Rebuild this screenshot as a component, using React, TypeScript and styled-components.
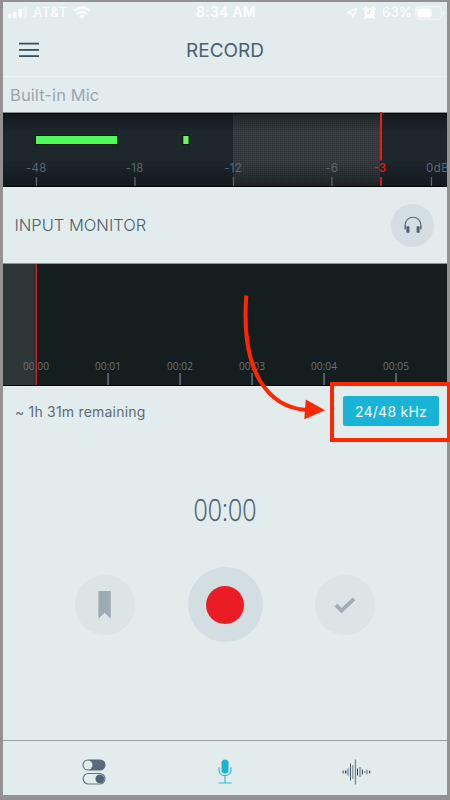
import React from "react";
import styled, { createGlobalStyle } from "styled-components";

const GlobalStyle = createGlobalStyle`
  * { box-sizing: border-box; }
  body { margin: 0; background: #929292; font-family: Inter, "Liberation Sans", sans-serif; }
  svg { display: block; flex: none; }
`;

const Frame = styled.div`
  position: relative;
  width: 450px;
  height: 800px;
  padding: 2px 3px 5px;
  background: #929292;
  overflow: hidden;
`;

const Screen = styled.main`
  display: flex;
  flex-direction: column;
  width: 444px;
  height: 793px;
  background: #e3eced;
  color: #4a5f70;
`;

const StatusBar = styled.div`
  display: grid;
  grid-template-columns: 1fr auto 1fr;
  align-items: center;
  height: 21px;
  padding: 0 2px 0 4px;
  color: #fff;
  font-size: 13.5px;
  line-height: 21px;
`;

const StatusGroup = styled.div<{ $end?: boolean }>`
  display: flex;
  align-items: center;
  justify-content: ${(p) => (p.$end ? "flex-end" : "flex-start")};
`;

const Carrier = styled.span`
  margin: 0 6px 0 6px;
  letter-spacing: 0.35px;
`;

const Clock = styled.span`
  font-size: 13.8px;
  font-weight: 600;
  letter-spacing: 0.35px;
`;

const Battery = styled.span`
  margin: 0 3px 0 6px;
`;

const Status = styled.span`
  display: flex;
  align-items: center;
  gap: 5px;
`;

const NavBar = styled.header`
  display: grid;
  grid-template-columns: 52px 1fr 52px;
  align-items: center;
  height: 54px;
  border-bottom: 1px solid #eef4f5;
`;

const MenuButton = styled.button`
  display: flex;
  padding: 1px 0 0 16px;
  border: 0;
  background: none;
`;

const Title = styled.h1`
  margin: 2px 0 0;
  text-align: center;
  font-size: 19px;
  font-weight: 400;
  line-height: 24px;
  letter-spacing: 0;
`;

const Source = styled.div`
  height: 35px;
  padding: 6px 0 0 7px;
  color: #9aa7b0;
  font-size: 16.5px;
  line-height: 24px;
  letter-spacing: 0.1px;
`;

const MonitorRow = styled.section`
  display: flex;
  align-items: center;
  justify-content: space-between;
  height: 76px;
  padding: 0 13px 0 11.5px;
`;

const MonitorLabel = styled.span`
  font-size: 16.5px;
  font-weight: 350;
  letter-spacing: 0;
`;

const RoundButton = styled.button<{ $size: number; $faint?: boolean }>`
  display: flex;
  align-items: center;
  justify-content: center;
  width: ${(p) => p.$size}px;
  height: ${(p) => p.$size}px;
  padding: 0;
  border: 0;
  border-radius: 50%;
  background: ${(p) => (p.$faint ? "#dce4e6" : "#d3dee3")};
`;

const InfoRow = styled.section`
  display: flex;
  align-items: center;
  justify-content: space-between;
  height: 50px;
  padding: 0 8px 0 12px;
`;

const Remaining = styled.span`
  font-size: 14px;
  letter-spacing: 0.2px;
  color: #5b6c7b;
`;

const RateButton = styled.button`
  width: 96px;
  height: 30px;
  padding: 0;
  border: 0;
  border-radius: 2px;
  background: #1ab3d8;
  color: #f2fafc;
  font: 400 14px Inter, sans-serif;
  letter-spacing: 0.25px;
`;

const Timer = styled.div`
  height: 131px;
  padding-top: 53px;
  text-align: center;
  font: 300 31.5px/40px "Open Sans", sans-serif;
  -webkit-text-stroke: 0.25px #4a5f70;
  transform: scaleX(0.79);
`;

const Controls = styled.div`
  display: flex;
  align-items: center;
  justify-content: space-between;
  height: 75px;
  padding: 0 72px;
`;

const RecordDot = styled.span`
  width: 38px;
  height: 38px;
  border-radius: 50%;
  background: #eb1c24;
`;

const TabBar = styled.nav`
  display: grid;
  grid-template-columns: repeat(3, 131px);
  justify-content: center;
  height: 55px;
  margin-top: auto;
  border-top: 1px solid #98a0a4;
`;

const Tab = styled.button`
  display: flex;
  align-items: center;
  justify-content: center;
  padding: 7px 0 0;
  border: 0;
  background: none;
`;

const Highlight = styled.div`
  position: absolute;
  left: 330px;
  top: 382px;
  width: 121px;
  height: 60px;
  border: 4px solid #ff2600;
`;

const ArrowOverlay = styled.svg`
  position: absolute;
  left: 235px;
  top: 290px;
`;

const levels = [
  { x: 33.5, label: "-48" },
  { x: 132, label: "-18" },
  { x: 230.5, label: "-12" },
  { x: 329, label: "-6" },
];

const Meter = () => (
  <svg width="444" height="75" viewBox="0 0 444 75">
    <defs>
      <pattern id="dots" width="2" height="2" patternUnits="userSpaceOnUse">
        <rect width="1" height="1" x="1" y="1" fill="#0c1216" opacity=".28" />
      </pattern>
      <linearGradient id="shade" x2="0" y2="1">
        <stop offset="0" stopColor="#0b1012" stopOpacity=".6" />
        <stop offset=".28" stopColor="#0b1012" stopOpacity="0" />
        <stop offset=".65" stopColor="#0b1012" stopOpacity="0" />
        <stop offset="1" stopColor="#0b1012" stopOpacity=".6" />
      </linearGradient>
    </defs>
    <rect width="444" height="75" fill="#1e282d" />
    <rect x="230" width="147" height="75" fill="#383f42" />
    <rect width="444" height="75" fill="url(#dots)" />
    <rect width="444" height="75" fill="url(#shade)" />
    <rect width="444" height="1" fill="#88908f" />
    <rect y="1" width="444" height="1" fill="#020405" />
    <rect y="74" width="444" height="1" fill="#020405" />
    <rect x="32" y="23" width="83" height="10" fill="#11191b" />
    <rect x="33" y="24" width="81" height="8" fill="#4dfb5b" />
    <rect x="179" y="23" width="8" height="10" fill="#11191b" />
    <rect x="180.3" y="24" width="5.2" height="8" fill="#66fb56" />
    <g fill="#5a6771" fontSize="11.5" textAnchor="middle" letterSpacing=".3">
      {levels.map((l) => (
        <g key={l.label}>
          <text x={l.x - 0.3} y="60">{l.label}</text>
          <rect x={l.x - 0.7} y="65" width="1.3" height="9" />
        </g>
      ))}
      <text x="423" y="60" textAnchor="start" letterSpacing=".5">0dB</text>
      <rect x="427.8" y="65" width="1.3" height="9" />
    </g>
    <rect x="377" y="0" width="2" height="48.5" fill="#f01818" />
    <rect x="377" y="65" width="2" height="9" fill="#d01b1d" />
    <text x="376.8" y="60" fill="#e0191b" fontSize="11.5" fontWeight="600" textAnchor="middle">-3</text>
  </svg>
);

const Timeline = () => (
  <svg width="444" height="123" viewBox="0 0 444 123">
    <rect width="444" height="123" fill="#151e1f" />
    <rect width="32" height="123" fill="#2e3537" />
    <rect width="444" height="1" fill="#8c9494" />
    <rect y="122" width="444" height="1" fill="#030606" />
    {[0, 1, 2, 3, 4, 5].map((n) => (
      <g key={n} fill="#65727d">
        <text
          x={33 + n * 72}
          y="107"
          fontFamily="Open Sans, sans-serif"
          fontSize="11.5"
          textAnchor="middle"
          textLength="26"
          lengthAdjust="spacingAndGlyphs"
        >
          {`00:0${n}`}
        </text>
        {n > 0 && <rect x={32.3 + n * 72} y="110" width="1.5" height="12" />}
      </g>
    ))}
    <rect x="31.5" y="1" width="3" height="121" fill="#101819" />
    <rect x="32.2" y="1" width="1.8" height="121" fill="#c1202d" />
  </svg>
);

const SignalIcon = () => (
  <svg width="20" height="11" viewBox="0 0 20 11" fill="#fff">
    <rect x="1" y="7" width="3.5" height="4" rx="1" />
    <rect x="6" y="5" width="3.5" height="6" rx="1" />
    <rect x="11.5" y="2" width="3.5" height="9" rx="1" />
    <rect x="16.5" y="0" width="3.5" height="11" rx="1" opacity=".35" />
  </svg>
);

const WifiIcon = () => (
  <svg width="18" height="13" viewBox="0 0 18 13">
    <g fill="none" stroke="#fff" strokeWidth="2.3">
      <path d="M1 4.8C5.5.5 12.5.5 17 4.8" />
      <path d="M3.9 8c2.9-2.7 7.3-2.7 10.2 0" />
    </g>
    <path d="M5.9 10.1c1.8-1.5 4.4-1.5 6.2 0L9 13z" fill="#fff" />
  </svg>
);

const LocationIcon = () => (
  <svg width="12" height="12" viewBox="0 0 12 12">
    <path d="M.8 6 11 1 6.6 11 6 6.3z" fill="none" stroke="#fff" strokeWidth="1.2" strokeLinejoin="round" />
  </svg>
);

const AlarmIcon = () => (
  <svg width="13" height="13" viewBox="0 0 13 13">
    <g fill="none" stroke="#fff" strokeWidth="1.8" strokeLinecap="round">
      <path d="M1.2 3 3.5 1.2M11.8 3 9.5 1.2M3 10.5l-1 1.5m8-1.5 1 1.5" />
    </g>
    <circle cx="6.5" cy="7" r="5.3" fill="#fff" />
    <path d="M6.7 4v3.2H3.8" fill="none" stroke="#ccd8da" />
  </svg>
);

const BatteryIcon = () => (
  <svg width="30" height="14" viewBox="0 0 30 14">
    <rect x=".7" y=".7" width="25.6" height="12.6" rx="3.5" fill="none" stroke="#f3f8f8" />
    <rect x="2.5" y="2.5" width="14" height="9" rx="1.8" fill="#fff" />
    <path d="M28 4.5q2.5 2.5 0 5z" fill="#f3f8f8" />
  </svg>
);

const MenuIcon = () => (
  <svg width="20" height="16" viewBox="0 0 20 16" fill="#36505f">
    <rect y="0.7" width="20" height="1.8" />
    <rect y="7" width="20" height="1.8" />
    <rect y="13.2" width="20" height="1.8" />
  </svg>
);

const HeadphonesIcon = () => (
  <svg width="18" height="18" viewBox="0 0 18 18">
    <path d="M1.2 13.5V9a7.8 7.8 0 0 1 15.6 0v4.5" fill="none" stroke="#5b6b79" strokeWidth="1.1" />
    <path d="M.6 9.5H2V13H.6zM16 9.5h1.4V13H16z" fill="#5b6b79" />
    <rect x="2.4" y="10.2" width="3" height="6.6" rx=".6" fill="#4e606f" />
    <rect x="12.6" y="10.2" width="3" height="6.6" rx=".6" fill="#4e606f" />
  </svg>
);

const BookmarkIcon = () => (
  <svg width="14" height="28" viewBox="0 0 14 28">
    <path d="M.4 0h12.4v27.8l-6.2-6-6.2 6z" fill="#9dabb4" />
  </svg>
);

const CheckIcon = () => (
  <svg width="22" height="18" viewBox="0 0 22 18">
    <path d="m1.9 9.2 5.6 5.5L20 2.8" fill="none" stroke="#a0acb6" strokeWidth="3.8" />
  </svg>
);

const SwitchesIcon = () => (
  <svg width="24" height="26" viewBox="0 0 24 26">
    <rect x=".5" y=".5" width="23" height="11" rx="5.5" fill="#596b7a" />
    <circle cx="6" cy="6" r="4.5" fill="#e3eced" />
    <rect x="1.1" y="14.5" width="21.8" height="10.5" rx="5.25" fill="none" stroke="#657682" strokeWidth="1.2" />
    <circle cx="17.8" cy="19.8" r="4.4" fill="#526575" />
  </svg>
);

const MicIcon = () => (
  <svg width="14" height="25" viewBox="0 0 14 25">
    <rect x="3.5" y="0.5" width="7" height="14" rx="3.5" fill="#1ab3d8" />
    <path d="M1 8.2v2.7c0 7.5 12 7.5 12 0V8.2M7 16.7V24M.5 24h13" fill="none" stroke="#36b9d7" strokeWidth="1.2" />
  </svg>
);

const waveBars = [
  [0.3, 1.7, 3, "#7c8b94"],
  [3, 1.3, 3, "#243f53"],
  [5, 2.2, 7, "#a0abb0"],
  [8, 1, 17, "#3f586a"],
  [10.2, 1.2, 14, "#83929b"],
  [12.8, 1.3, 25, "#7c898f"],
  [15, 1, 7, "#2b465a"],
  [17, 2.2, 10, "#9ea9ae"],
  [20, 1, 5, "#3c5567"],
  [22, 1.5, 2, "#8c999f"],
  [24, 1.8, 5, "#9ba7ac"],
  [27, 1.2, 2.5, "#243f53"],
] as const;

const WaveIcon = () => (
  <svg width="29" height="26" viewBox="0 0 29 26">
    {waveBars.map(([x, w, h, color]) => (
      <rect key={x} x={x} y={13 - h / 2} width={w} height={h} fill={color} />
    ))}
  </svg>
);

export default function App() {
  return (
    <Frame>
      <GlobalStyle />
      <Screen>
        <StatusBar>
          <StatusGroup>
            <SignalIcon />
            <Carrier>AT&amp;T</Carrier>
            <WifiIcon />
          </StatusGroup>
          <Clock>8:34 AM</Clock>
          <StatusGroup $end>
            <Status>
              <LocationIcon />
              <AlarmIcon />
            </Status>
            <Battery>63%</Battery>
            <BatteryIcon />
          </StatusGroup>
        </StatusBar>
        <NavBar>
          <MenuButton aria-label="Menu"><MenuIcon /></MenuButton>
          <Title>RECORD</Title>
        </NavBar>
        <Source>Built-in Mic</Source>
        <Meter />
        <MonitorRow>
          <MonitorLabel>INPUT MONITOR</MonitorLabel>
          <RoundButton $size={43} aria-label="Headphones"><HeadphonesIcon /></RoundButton>
        </MonitorRow>
        <Timeline />
        <InfoRow>
          <Remaining>~ 1h 31m remaining</Remaining>
          <RateButton>24/48 kHz</RateButton>
        </InfoRow>
        <Timer>00:00</Timer>
        <Controls>
          <RoundButton $size={60} $faint aria-label="Bookmark"><BookmarkIcon /></RoundButton>
          <RoundButton $size={75} aria-label="Record"><RecordDot /></RoundButton>
          <RoundButton $size={60} $faint aria-label="Done"><CheckIcon /></RoundButton>
        </Controls>
        <TabBar>
          <Tab aria-label="Settings"><SwitchesIcon /></Tab>
          <Tab aria-label="Record"><MicIcon /></Tab>
          <Tab aria-label="Recordings"><WaveIcon /></Tab>
        </TabBar>
      </Screen>
      <Highlight />
      <ArrowOverlay width="95" height="135" viewBox="0 0 95 135">
        <path d="M11.3 5.5C5.5 82 33 117.5 72 120" fill="none" stroke="#ff2600" strokeWidth="4" />
        <path d="M70.8 109.5 90 120.3 69.3 129.3z" fill="#ff2600" />
      </ArrowOverlay>
    </Frame>
  );
}
